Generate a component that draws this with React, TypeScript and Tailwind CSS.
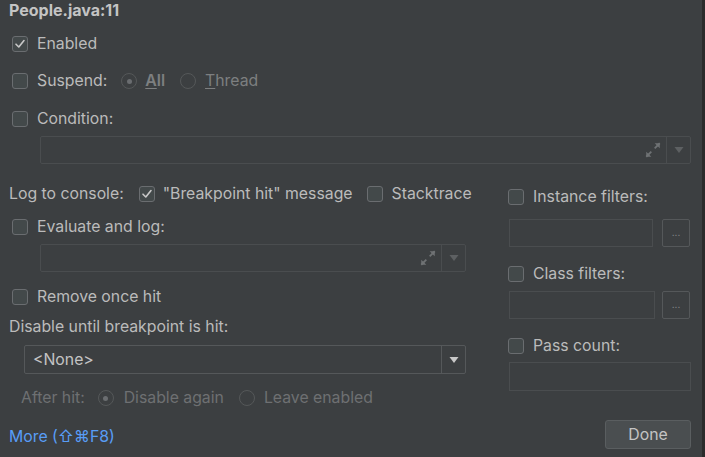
import React from "react";

const Check = ({ checked = false }: { checked?: boolean }) => (
  <div className="w-[16px] h-[16px] rounded-[3px] border border-[#6a6d70] bg-[#43494a] flex items-center justify-center shrink-0">
    {checked && (
      <svg width="12" height="12" viewBox="0 0 12 12">
        <path d="M2 6.2 L4.8 9 L10 2.5" fill="none" stroke="#c8c8c8" strokeWidth="1.6" strokeLinecap="round" strokeLinejoin="round" />
      </svg>
    )}
  </div>
);

const Radio = ({ selected = false }: { selected?: boolean }) => (
  <div className="w-[16px] h-[16px] rounded-full border border-[#555859] flex items-center justify-center shrink-0">
    {selected && <div className="w-[5px] h-[5px] rounded-full bg-[#6a6d70]" />}
  </div>
);

const Expand = () => (
  <svg width="18" height="18" viewBox="0 0 16 16">
    <g fill="none" stroke="#6f7274" strokeWidth="1.6">
      <path d="M9.5 6.5 L14 2" />
      <path d="M6.5 9.5 L2 14" />
    </g>
    <path d="M9.5 2 L14 2 L14 6.5 Z" fill="#6f7274" />
    <path d="M2 9.5 L2 14 L6.5 14 Z" fill="#6f7274" />
  </svg>
);

const Arrow = ({ color }: { color: string }) => (
  <svg width="10" height="8" viewBox="0 0 10 8">
    <path d="M0.5 1 L9.5 1 L5 7 Z" fill={color} />
  </svg>
);

const ExprField = ({ width }: { width: string }) => (
  <div className={`${width} h-[28px] border border-[#4a4d4f] rounded-[2px] flex items-center`}>
    <div className="flex-1" />
    <div className="w-[26px] flex items-center justify-center">
      <Expand />
    </div>
    <div className="h-full w-px bg-[#4a4d4f]" />
    <div className="w-[23px] flex items-center justify-center">
      <Arrow color="#5d6062" />
    </div>
  </div>
);

const Row = ({ children, className = "" }: { children: React.ReactNode; className?: string }) => (
  <div className={`h-[24px] pt-[2px] flex items-center whitespace-nowrap ${className}`}>{children}</div>
);

export default function App() {
  return (
    <div
      className="w-[705px] h-[457px] bg-[#3c3f41] text-[#bbbbbb] text-[15.8px] overflow-hidden flex border-r-[3px] border-[#2b2b2b]"
      style={{ fontFamily: "Inter, 'Liberation Sans', sans-serif" }}
    >
      <div className="flex-1 flex flex-col pl-[9px]">
        <div className="h-[20px] flex items-center font-bold text-[16px] text-[#c4c4c4]">People.java:11</div>

        <Row className="mt-[11px] pl-[3px] gap-[9px]">
          <Check checked />
          <span>Enabled</span>
        </Row>

        <Row className="mt-[13px] pl-[3px]">
          <Check />
          <span className="ml-[9px]">Suspend:</span>
          <div className="ml-[14px]"><Radio selected /></div>
          <span className="ml-[8px] text-[#7d7f80] font-semibold"><span className="underline underline-offset-2">A</span>ll</span>
          <div className="ml-[15px]"><Radio /></div>
          <span className="ml-[9px] text-[#7d7f80]"><span className="underline underline-offset-2">T</span>hread</span>
        </Row>

        <Row className="mt-[14px] pl-[3px] gap-[9px]">
          <Check />
          <span>Condition:</span>
        </Row>

        <div className="mt-[6px] pl-[31px]">
          <ExprField width="w-[651px]" />
        </div>

        <div className="flex mt-[17px]">
          <div className="w-[490px] flex flex-col">
            <Row>
              <span>Log to console:</span>
              <div className="ml-[15px]"><Check checked /></div>
              <span className="ml-[8px]">"Breakpoint hit" message</span>
              <div className="ml-[14px]"><Check /></div>
              <span className="ml-[9px]">Stacktrace</span>
            </Row>

            <Row className="mt-[9px] pl-[3px] gap-[9px]">
              <Check />
              <span>Evaluate and log:</span>
            </Row>

            <div className="mt-[6px] pl-[31px]">
              <ExprField width="w-[426px]" />
            </div>

            <Row className="mt-[12px] pl-[3px] gap-[9px]">
              <Check />
              <span>Remove once hit</span>
            </Row>

            <Row className="mt-[6px]">
              <span>Disable until breakpoint is hit:</span>
            </Row>

            <div className="mt-[7px] pl-[15px]">
              <div className="w-[442px] h-[29px] border border-[#55585a] rounded-[2px] flex items-center">
                <span className="flex-1 pl-[8px] text-[#c4c4c4]">&lt;None&gt;</span>
                <div className="h-full w-px bg-[#55585a]" />
                <div className="w-[23px] flex items-center justify-center">
                  <Arrow color="#c8c8c8" />
                </div>
              </div>
            </div>

            <Row className="mt-[11px] pl-[12px] text-[#6e7072]">
              <span>After hit:</span>
              <div className="ml-[13px]"><Radio selected /></div>
              <span className="ml-[10px]">Disable again</span>
              <div className="ml-[15px]"><Radio /></div>
              <span className="ml-[9px]">Leave enabled</span>
            </Row>

            <Row className="mt-[15px] text-[#589df6]">
              <span>More (⇧⌘F8)</span>
            </Row>
          </div>

          <div className="w-[193px] shrink-0 flex flex-col pl-[9px]">
            <Row className="mt-[3px] gap-[9px]">
              <Check />
              <span>Instance filters:</span>
            </Row>
            <div className="mt-[11px] flex items-center gap-[9px] pl-px">
              <div className="w-[144px] h-[28px] border border-[#4a4d4f] shrink-0" />
              <div className="w-[28px] h-[28px] shrink-0 border border-[#55585a] rounded-[2px] flex items-center justify-center text-[10px] text-[#8a8c8e] leading-none pb-[3px]">...</div>
            </div>
            <Row className="mt-[14px] gap-[9px]">
              <Check />
              <span>Class filters:</span>
            </Row>
            <div className="mt-[6px] flex items-center gap-[7px] pl-px">
              <div className="w-[146px] h-[28px] border border-[#4a4d4f] shrink-0" />
              <div className="w-[28px] h-[28px] shrink-0 border border-[#55585a] rounded-[2px] flex items-center justify-center text-[10px] text-[#8a8c8e] leading-none pb-[3px]">...</div>
            </div>
            <Row className="mt-[14px] gap-[9px]">
              <Check />
              <span>Pass count:</span>
            </Row>
            <div className="mt-[5px] pl-px">
              <div className="w-[182px] h-[29px] border border-[#4a4d4f]" />
            </div>
            <div className="mt-[29px] flex justify-end pr-[1px]">
              <div className="w-[86px] h-[29px] bg-[#4a4e50] border border-[#5a5e60] rounded-[3px] flex items-center justify-center text-[#c4c4c4]">Done</div>
            </div>
          </div>
        </div>
      </div>
    </div>
  );
}
